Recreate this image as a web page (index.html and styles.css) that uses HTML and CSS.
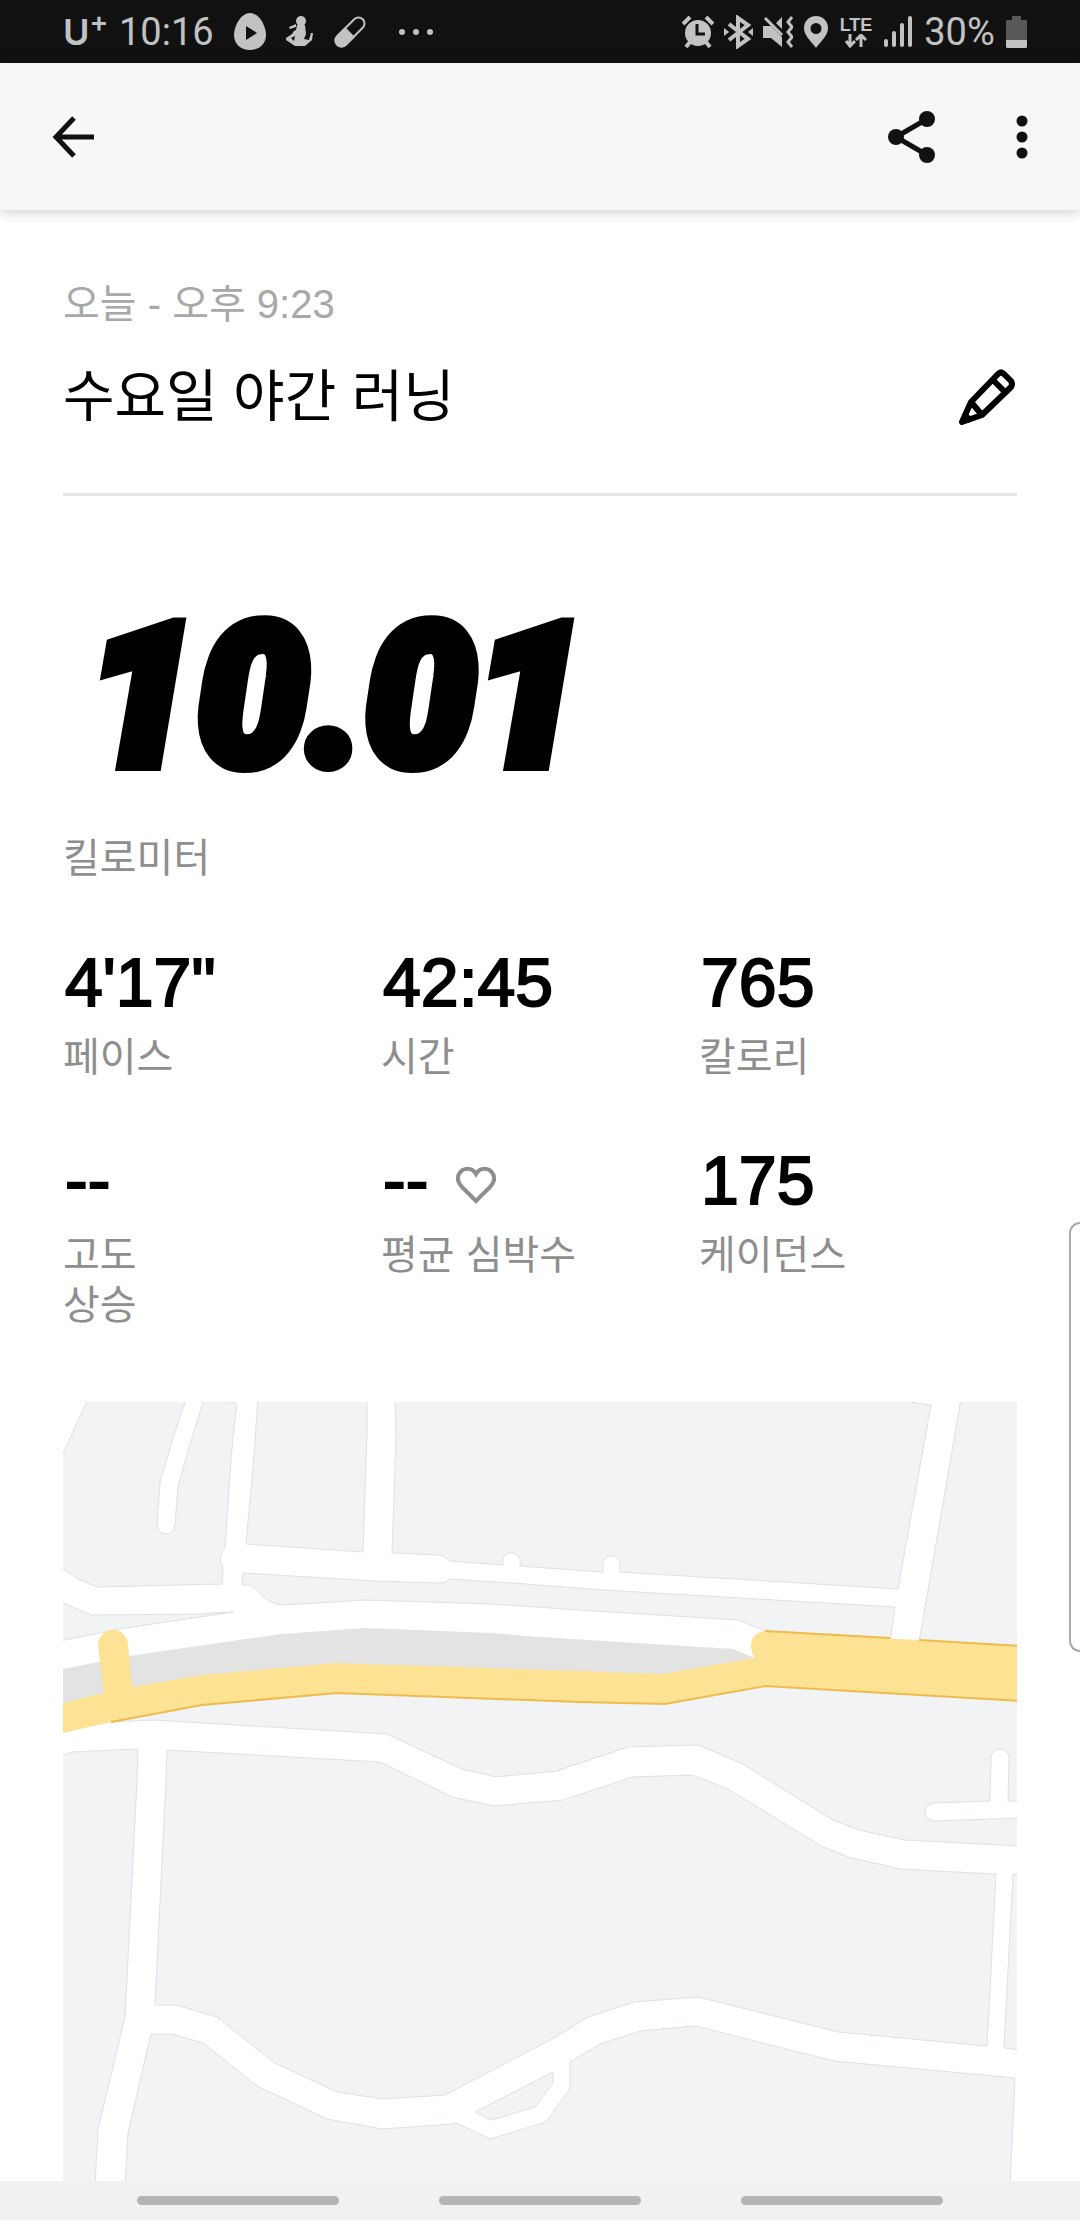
FILE: index.html
```html
<!DOCTYPE html>
<html lang="ko">
<head>
    <meta charset="UTF-8">
    <meta name="viewport" content="width=device-width, initial-scale=1.0">
    <title>수요일 야간 러닝</title>
    <link rel="stylesheet" href="styles.css">
</head>
<body>
    <div class="status-bar">
        <div class="status-left">
            <span class="carrier">U<sup>+</sup></span>
            <span class="clock">10:16</span>
            <svg class="notice" width="32" height="38" viewBox="0 0 32 38">
                <path fill="#c2c2c2" d="M16 0C25 0 32 13 32 22C32 31 25 37 16 37S0 31 0 22C0 13 7 0 16 0Z"/>
                <path fill="#111" d="M12 13L23 20L12 27Z"/>
            </svg>
            <svg class="notice" width="28" height="31" viewBox="0 0 28 31">
                <circle cx="15" cy="5" r="5" fill="#c2c2c2"/>
                <path fill="#c2c2c2" fill-rule="evenodd" d="M10 8L3 11L4 13L10 11ZM11 9H19L20 18L18 23L23 24L25 17H27L26 24L19 30H9L0 24V22L6 18L8 15L10 14ZM5 22L8 25L9 20Z"/>
            </svg>
            <svg class="notice" width="32" height="32" viewBox="0 0 32 32">
                <g transform="rotate(45 16 16)">
                    <rect x="10" y="-2" width="12" height="36" rx="6" fill="none" stroke="#c2c2c2" stroke-width="2"/>
                    <path fill="#c2c2c2" d="M9 16H23V28A7 7 0 0 1 9 28Z"/>
                </g>
            </svg>
            <svg class="more-notices" width="36" height="6" viewBox="0 0 36 6" fill="#c2c2c2">
                <circle cx="4" cy="3" r="3"/><circle cx="18" cy="3" r="3"/><circle cx="32" cy="3" r="3"/>
            </svg>
        </div>
        <div class="status-right">
            <!-- alarm -->
            <svg width="32" height="32" viewBox="0 0 32 32">
                <circle cx="16" cy="17" r="13" fill="#c2c2c2"/>
                <path d="M1 8L8 1M31 8L24 1M8 26L4 31M24 26L28 31" stroke="#c2c2c2" stroke-width="4"/>
                <path d="M15 8V18H23" fill="none" stroke="#111" stroke-width="3"/>
            </svg>
            <!-- bluetooth -->
            <svg width="29" height="34" viewBox="0 0 29 34">
                <path d="M5 9L24 24L14 31V3L24 10L5 25" fill="none" stroke="#c2c2c2" stroke-width="4"/>
                <path d="M0 13V21L5 17ZM29 13V21L24 17Z" fill="#c2c2c2"/>
            </svg>
            <!-- vibrate -->
            <svg width="30" height="32" viewBox="0 0 30 32">
                <path d="M0 10H8L19 21V31L8 22H0ZM13 7L19 1V13Z" fill="#c2c2c2"/>
                <path d="M2 2L19 19" stroke="#c2c2c2" stroke-width="3"/>
                <path d="M29 1L25 6L29 11L25 16L29 21L25 26L29 31" fill="none" stroke="#c2c2c2" stroke-width="3"/>
            </svg>
            <!-- location -->
            <svg width="26" height="32" viewBox="0 0 26 32">
                <path fill="#c2c2c2" fill-rule="evenodd" d="M13 0C20 0 25 5 25 12C25 20 17 26 13 32C9 26 1 20 1 12C1 5 6 0 13 0ZM13 7A5.500 5.500 0 1 0 13 18A5.500 5.500 0 1 0 13 7Z"/>
            </svg>
            <div class="network">
                <span>LTE</span>
                <svg width="22" height="14" viewBox="0 0 22 14">
                    <path d="M5 0V11M1 7L5 12L10 7M16 13V2M11 6L16 1L21 6" fill="none" stroke="#c2c2c2" stroke-width="3"/>
                </svg>
            </div>
            <svg width="30" height="32" viewBox="0 0 30 32">
                <path d="M3 25V29M11 17V29M19 9V29M27 2V29" stroke="#c2c2c2" stroke-width="4" stroke-linecap="round"/>
            </svg>
            <span class="percent">30%</span>
            <svg width="21" height="32" viewBox="0 0 21 32">
                <path fill="#585858" d="M6 0H15V4H20L21 5V24H0V5L1 4H6Z"/>
                <path fill="#c2c2c2" d="M0 24H21V31L20 32H1L0 31Z"/>
            </svg>
        </div>
    </div>

    <header class="app-bar">
        <button class="icon-button" aria-label="뒤로">
            <svg width="42" height="42" viewBox="0 0 42 42" fill="none" stroke="#111" stroke-width="5">
                <path d="M22 2L4 21L22 40M4 21H42"/>
            </svg>
        </button>
        <div class="app-actions">
            <button class="icon-button" aria-label="공유">
                <svg width="48" height="54" viewBox="0 0 48 54" fill="#111">
                    <path d="M39 9L8 27L39 45" fill="none" stroke="#111" stroke-width="5"/>
                    <circle cx="39" cy="9" r="8"/><circle cx="8" cy="27" r="8"/><circle cx="39" cy="45" r="8"/>
                </svg>
            </button>
            <button class="icon-button" aria-label="더보기">
                <svg width="12" height="44" viewBox="0 0 12 44" fill="#111">
                    <circle cx="6" cy="6" r="5.500"/><circle cx="6" cy="22" r="5.500"/><circle cx="6" cy="38" r="5.500"/>
                </svg>
            </button>
        </div>
    </header>

    <main class="run">
        <p class="run-date">오늘 - 오후 9:23</p>
        <div class="run-heading">
            <h1>수요일 야간 러닝</h1>
            <button class="icon-button" aria-label="이름 수정">
                <svg width="56" height="56" viewBox="0 0 56 56" fill="none" stroke="#000" stroke-width="6" stroke-linejoin="round">
                    <path d="M3 53L12 33L39 5Q42 2 45 5L52 12Q54 15 52 18L23 46ZM12 33L23 46M34 11L45 22M5 45L12 52"/>
                </svg>
            </button>
        </div>

        <div class="distance">10.01</div>
        <p class="label distance-label">킬로미터</p>

        <div class="stats">
            <div>
                <div class="value">4'17"</div>
                <div class="label">페이스</div>
            </div>
            <div>
                <div class="value">42:45</div>
                <div class="label">시간</div>
            </div>
            <div>
                <div class="value">765</div>
                <div class="label">칼로리</div>
            </div>
            <div>
                <div class="value">--</div>
                <div class="label">고도<br>상승</div>
            </div>
            <div>
                <div class="value">--
                    <svg width="40" height="38" viewBox="0 0 40 38" fill="none" stroke="#8e8e8e" stroke-width="4">
                        <path d="M20 35L6 21C2 17 1 12 3 8C7 1 16 1 20 8C24 1 33 1 37 8C39 12 38 17 34 21Z"/>
                    </svg>
                </div>
                <div class="label">평균 심박수</div>
            </div>
            <div>
                <div class="value">175</div>
                <div class="label">케이던스</div>
            </div>
        </div>

        <svg class="map" viewBox="0 0 954 779" preserveAspectRatio="xMidYMin slice" role="img" aria-label="러닝 경로 지도">
            <!-- city blocks, the roads are the gaps between them -->
            <g class="block">
                <path d="M25 -3L-3 58V165L15 177L34 185L159 182L160 166Q154 156 162 145L167 71L170 35L174 1L165 0L160 -3H141L125 49L115 85L112 123A9 9 0 0 1 94 123L97 80L111 33L123 -3Z"/>
                <path d="M195 -3L190 65L183 142L300 150L304 30V-3Z"/>
                <path d="M332 -3L333 36L329 151L376 153Q381 153 387 159L440 163V157A9 9 0 0 1 457 157V164L540 170V160A9 9 0 0 1 557 160V170L835 187L868 3L847 0L840 -3Z"/>
                <path d="M898 -3L856 240L957 250V-3Z"/>
                <path d="M180 171L179 183H188L207 200L220 203L302 198L428 202L517 208L675 218L702 229L827 240L832 205L540 188L449 181L387 177Q382 182 376 181L311 179Z"/>
                <path d="M-3 200L29 213L132 212L170 210L56 227L-3 239Z"/>
                <path d="M48 320L90 318L324 332L399 367L433 375L493 369L565 345L635 343L678 361L770 418L796 428L842 438L957 444V416L871 419A9 9 0 0 1 871 401L927 399L928 356A9 9 0 0 1 946 356L945 399H957V296L702 282L602 300L517 298L274 289L139 301Z"/>
                <path d="M-3 354L10 350L75 347L74 378L62 615L35 727L32 785H-3Z"/>
                <path d="M104 348L317 360L354 378L389 395L431 404L500 398L570 375L629 373L665 387L758 444L788 456L838 467L911 471L933 472L924 644L775 630L635 595L571 600L525 615L491 636L382 693L320 697L274 690L210 660L154 615L113 603L92 603L103 378Z"/>
                <path d="M957 472H950L941 646L957 648Z"/>
                <path d="M88 632L109 632L140 641L194 684L264 717L319 727L389 722L393 721L427 737L483 720L507 687V660L537 642L577 629L632 624L771 659L931 674L952 676L947 785H62L65 731Z"/>
                <path d="M412 710L490 670V681L472 705L428 718Z"/>
            </g>

            <!-- median strip -->
            <path fill="#e3e3e3" d="M0 267L66 254L218 232L302 226L428 231L477 235L670 247L692 256L599 280L274 270L0 310Z"/>

            <!-- highway -->
            <path fill="#fde293" d="M0 301L41 291L35 243A15 15 0 0 1 65 243L69 285L139 273L273 261L517 269L599 272L692 256Q688 251 688 244Q688 231 702 229L954 244V299L702 284L602 302L517 300L274 291L139 303L48 320L0 331Z"/>
            <path class="highway-edge" d="M702 229L827 236M856 238L957 244M48 320L139 303L274 291L517 300L602 302L702 284L957 299"/>
        </svg>
    </main>

    <div class="edge-handle"></div>

    <nav class="nav-bar">
        <button aria-label="최근 앱"></button>
        <button aria-label="홈"></button>
        <button aria-label="뒤로 가기"></button>
    </nav>
</body>
</html>
```

FILE: styles.css
```css
* {
    box-sizing: border-box;
}

body {
    margin: 0;
    min-height: 100vh;
    display: flex;
    flex-direction: column;
    background: #fff;
    color: #000;
    font-family: "Liberation Sans", "Noto Sans CJK KR", sans-serif;
}

h1, p {
    margin: 0;
    font-weight: normal;
}

svg {
    display: block;
    flex-shrink: 0;
}

button {
    padding: 0;
    border: none;
    background: none;
    cursor: pointer;
}

/* Status bar */
.status-bar {
    display: flex;
    justify-content: space-between;
    align-items: center;
    height: 63px;
    padding: 0 53px 0 63px;
    background: #111;
    color: #c2c2c2;
    font-family: Roboto, sans-serif;
    font-size: 38px;
}

.status-left,
.status-right {
    display: flex;
    align-items: center;
}

.status-left {
    gap: 20px;
}

.status-right {
    gap: 10px;
}

.carrier {
    display: flex;
    width: 36px;
    font-family: Inter, sans-serif;
    font-size: 36px;
    font-weight: 600;
    line-height: 44px;
}

.carrier sup {
    font-size: 28px;
    line-height: 24px;
}

.clock,
.percent {
    line-height: 44px;
}

.percent {
    width: 73px;
    text-align: center;
}

.more-notices {
    margin-left: 12px;
}

.network {
    display: flex;
    flex-direction: column;
    align-items: center;
    width: 34px;
    font-family: "Liberation Sans", sans-serif;
    font-size: 18px;
    font-weight: bold;
    line-height: 18px;
}

/* App bar */
.app-bar {
    display: flex;
    justify-content: space-between;
    align-items: center;
    height: 147px;
    padding: 0 52px;
    background: #f7f7f7;
    box-shadow: 0 2px 12px rgba(0, 0, 0, 0.2);
}

.app-actions {
    display: flex;
    align-items: center;
    gap: 80px;
}

/* Run summary */
.run {
    flex: 1;
    display: flex;
    flex-direction: column;
    padding: 69px 63px 0;
}

.run-date {
    color: #a8a8a8;
    font-size: 40px;
    line-height: 50px;
}

.run-heading {
    display: flex;
    justify-content: space-between;
    align-items: center;
    padding: 32px 2px 61px 0;
    border-bottom: 3px solid #e5e5e5;
}

.run-heading h1 {
    font-size: 56px;
    line-height: 71px;
}

.distance {
    margin-top: 101px;
    padding-left: 24px;
    font-family: Roboto, sans-serif;
    font-size: 196px;
    font-style: italic;
    font-weight: 900;
    line-height: 200px;
    -webkit-text-stroke: 14px #000;
}

.label {
    color: #8e8e8e;
    font-size: 40px;
    line-height: 50px;
}

.distance-label {
    margin-top: 36px;
}

.stats {
    display: grid;
    grid-template-columns: repeat(3, 1fr);
    row-gap: 58px;
    margin: 59px 0 72px;
}

.value {
    display: flex;
    align-items: baseline;
    gap: 28px;
    margin-bottom: 10px;
    padding-left: 2px;
    font-size: 68px;
    line-height: 80px;
    -webkit-text-stroke: 2px #000;
}

.map {
    flex: 1;
    width: 100%;
    background: #fff;
}

.block {
    fill: #f1f3f5;
    stroke: #dfe0e2;
    stroke-width: 1;
}

.highway-edge {
    fill: none;
    stroke: #eebb4d;
    stroke-width: 2;
}

/* Samsung edge panel handle */
.edge-handle {
    position: absolute;
    top: 1222px;
    right: 0;
    width: 11px;
    height: 430px;
    border: 2px solid #aaa;
    border-right: none;
    border-radius: 16px 0 0 16px;
    background: #fff;
}

/* Navigation bar */
.nav-bar {
    display: flex;
    justify-content: center;
    align-items: center;
    gap: 100px;
    height: 39px;
    background: #f1f1f1;
}

.nav-bar button {
    width: 202px;
    height: 9px;
    border-radius: 5px;
    background: #b4b4b4;
}
```
